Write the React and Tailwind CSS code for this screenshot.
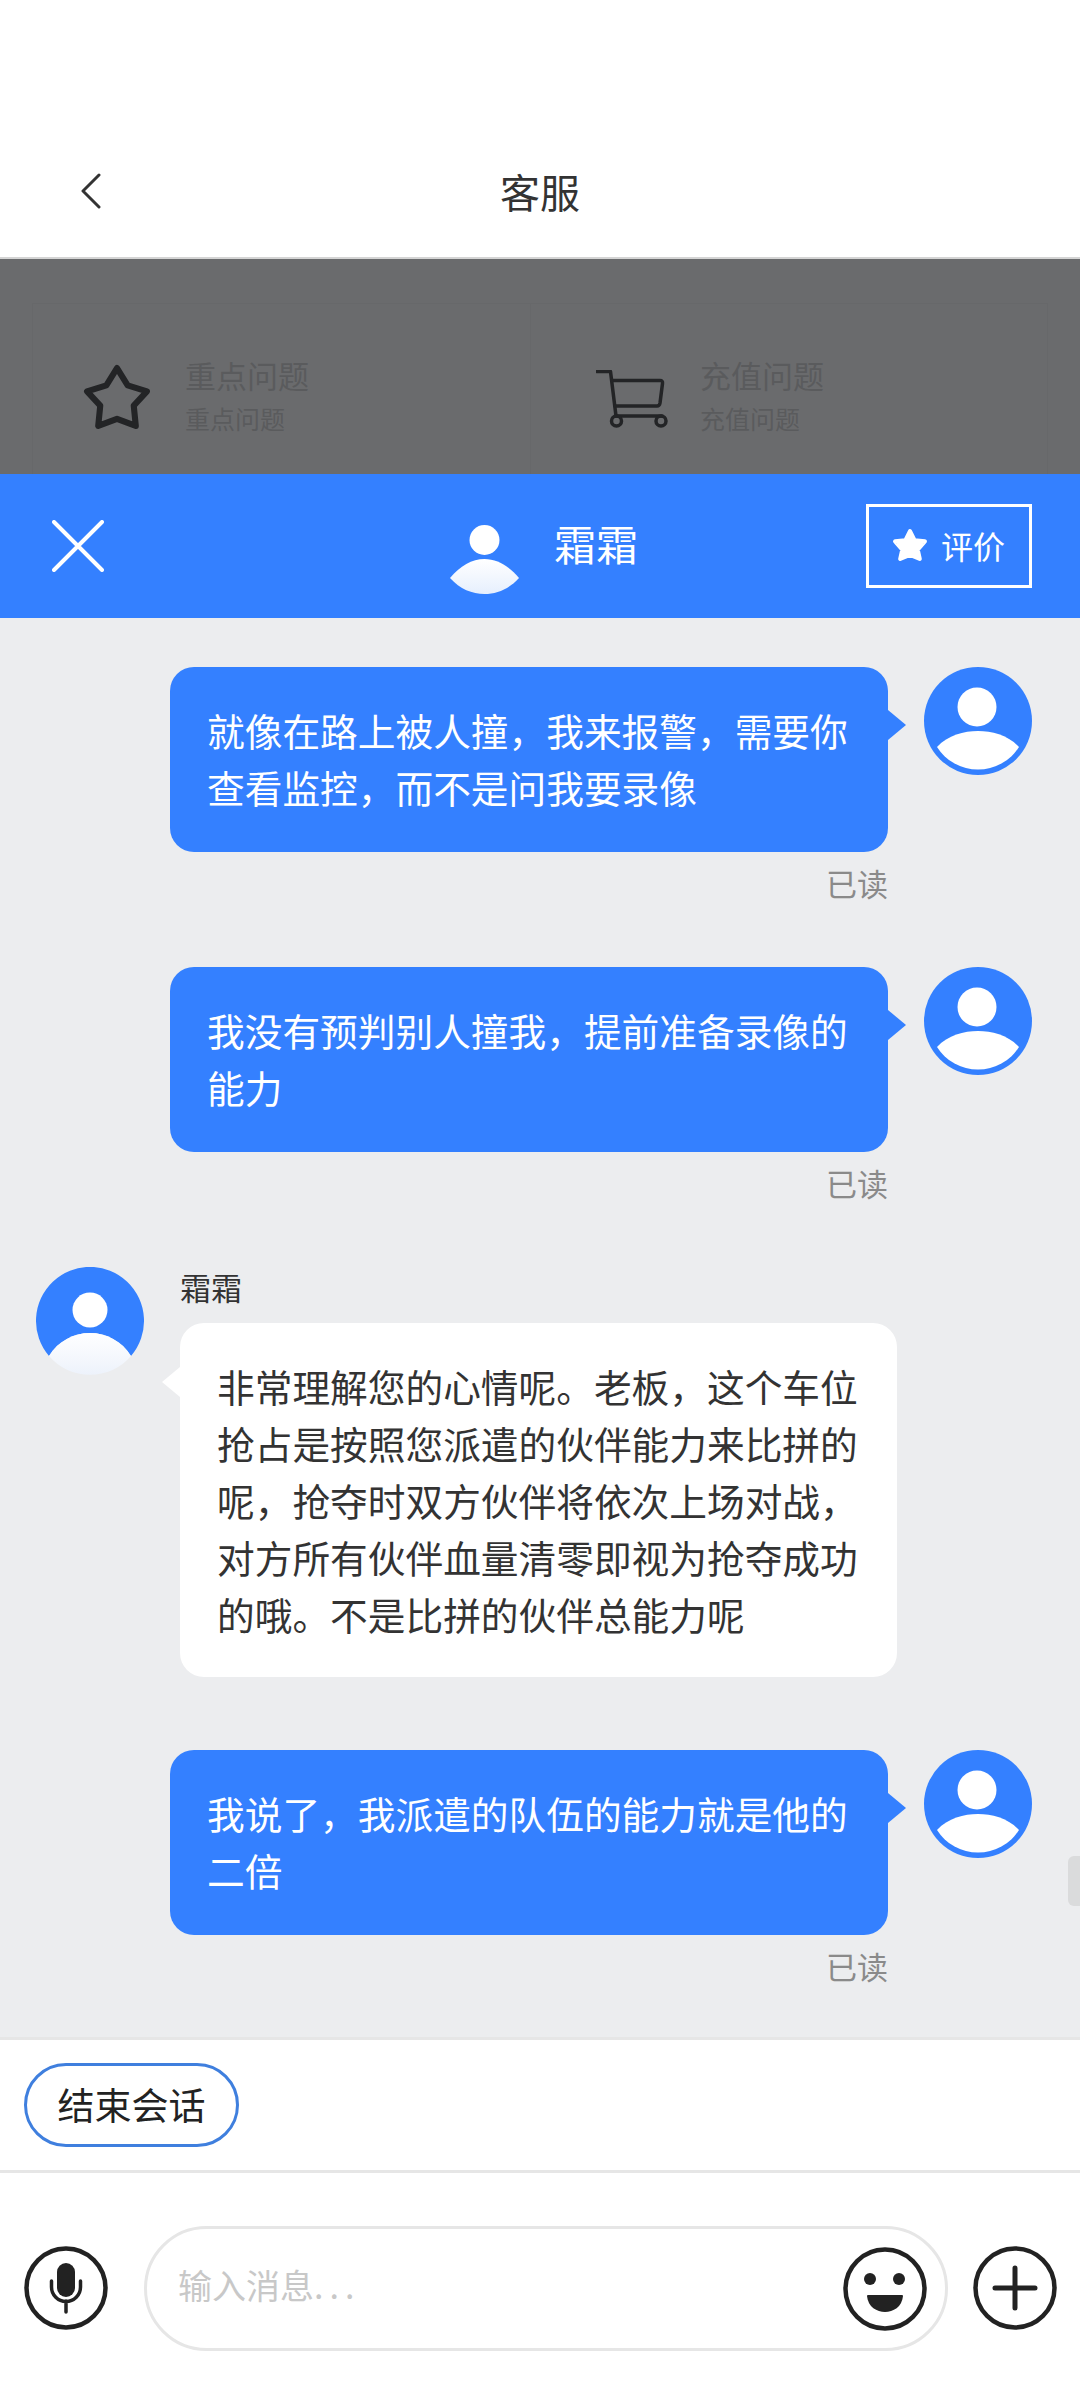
function UserAvatar() {
  return (
    <svg width="108" height="108" viewBox="0 0 108 108" className="shrink-0">
      <circle cx="54" cy="54" r="54" fill="#3480ff" />
      <circle cx="53" cy="40" r="19.5" fill="#fff" />
      <path d="M13 80C24 68 40 64 54 64C68 64 84 68 95 80A48.5 48.5 0 0 1 13 80Z" fill="#fff" />
    </svg>
  );
}

function AgentAvatar() {
  return (
    <svg width="108" height="108" viewBox="0 0 108 108" className="shrink-0">
      <defs>
        <linearGradient id="agentBody" x1="0" y1="0" x2="0" y2="1">
          <stop offset="0" stopColor="#ffffff" />
          <stop offset="1" stopColor="#edf2fb" />
        </linearGradient>
      </defs>
      <path d="M13 89A54 54 0 1 1 95 89C86 74 70 66 54 66C38 66 22 74 13 89Z" fill="#3480ff" />
      <circle cx="54" cy="43" r="17.5" fill="#fff" />
      <path d="M13 89C22 74 38 66 54 66C70 66 86 74 95 89A54 54 0 0 1 13 89Z" fill="url(#agentBody)" />
    </svg>
  );
}

function UserMessage({ children, className = "" }) {
  return (
    <div className={`flex justify-end gap-[36px] pr-[48px] ${className}`}>
      <div className="w-[718px]">
        <div className="relative rounded-[24px] bg-[#3480ff] px-[37px] pb-[37px] pt-[34px] text-[37.7px] leading-[57px] text-white">
          {children}
          <span className="absolute left-full top-[43px] h-0 w-0 border-y-[15px] border-l-[18px] border-y-transparent border-l-[#3480ff]" />
        </div>
        <div className="mt-[13px] text-right text-[31px] leading-[36px] text-[#8a8a8a]">已读</div>
      </div>
      <UserAvatar />
    </div>
  );
}

export default function App() {
  return (
    <div className="relative flex h-[2400px] w-[1080px] flex-col overflow-hidden bg-white font-['Noto_Sans_CJK_SC',sans-serif]">
      {/* Top bar */}
      <header className="relative flex h-[259px] shrink-0 items-end justify-center border-b-[2px] border-[#d4d4d4] pb-[37px]">
        <svg width="24" height="36" viewBox="0 0 24 36" className="absolute bottom-[48px] left-[79px]" fill="none" stroke="#333" strokeWidth="3" strokeLinecap="round" strokeLinejoin="round">
          <path d="M20 2L4 18L20 34" />
        </svg>
        <span className="text-[40px] leading-[58px] text-[#333]">客服</span>
      </header>

      {/* Dimmed page */}
      <section className="h-[215px] shrink-0 overflow-hidden bg-[#6a6b6d] px-[32px] pt-[44px]">
        <div className="flex h-[240px] border border-[#67686a]">
          <div className="flex w-[498px] items-start gap-[34px] border-r border-[#67686a] pl-[50px] pt-[54px]">
            <svg width="68" height="67" viewBox="0 0 67 66" className="mt-[6px] shrink-0" fill="none" stroke="#232426" strokeWidth="6" strokeLinejoin="round">
              <polygon points="33.5,4 44,21 63,27 50,41 52,61 33.5,54 15,61 17,41 4,27 23,21" />
            </svg>
            <div className="text-[#5a5b5d]">
              <div className="text-[31px] leading-[34px]">重点问题</div>
              <div className="mt-[10px] text-[25px] leading-[32px]">重点问题</div>
            </div>
          </div>
          <div className="flex flex-1 items-start gap-[32px] pl-[65px] pt-[54px]">
            <svg width="72" height="58" viewBox="0 0 72 58" className="mt-[12px] shrink-0" fill="none" stroke="#232426" strokeWidth="3.5" strokeLinecap="round" strokeLinejoin="round">
              <path d="M1 1.5H14.5L20 46H66" />
              <path d="M16 10.5H64Q67 10.5 66.5 13.5L64 33Q63.5 36 61 36H19" />
              <circle cx="20.5" cy="51" r="5" />
              <circle cx="65" cy="51" r="5" />
            </svg>
            <div className="text-[#5a5b5d]">
              <div className="text-[31px] leading-[34px]">充值问题</div>
              <div className="mt-[10px] text-[25px] leading-[32px]">充值问题</div>
            </div>
          </div>
        </div>
      </section>

      {/* Blue header */}
      <section className="relative flex h-[144px] shrink-0 items-center justify-between bg-[#3480ff] pl-[52px] pr-[48px]">
        <svg width="52" height="52" viewBox="0 0 52 52" stroke="#fff" strokeWidth="4" strokeLinecap="round">
          <path d="M2 2L50 50M50 2L2 50" />
        </svg>
        <div className="absolute left-[450px] top-[49px] flex items-start gap-[34px]">
          <svg width="70" height="72" viewBox="450 520 70 72">
            <defs>
              <linearGradient id="headBody" x1="0" y1="0" x2="0" y2="1">
                <stop offset="0" stopColor="#ffffff" />
                <stop offset="1" stopColor="#e6effd" />
              </linearGradient>
            </defs>
            <circle cx="484.5" cy="537" r="15" fill="#fff" />
            <path d="M450 575C460 563 472 556 484.5 556C497 556 509 563 519 575C509 586 497 591 484.5 591C472 591 460 586 450 575Z" fill="url(#headBody)" />
          </svg>
          <span className="-mt-[6px] text-[42px] leading-[52px] text-white">霜霜</span>
        </div>
        <div className="flex h-[84px] w-[166px] items-center gap-[13px] border-[3px] border-white pb-[2px] pl-[23px]">
          <svg width="36" height="34" viewBox="0 0 35 33" fill="#fff" stroke="#fff" strokeWidth="4" strokeLinejoin="round">
            <polygon points="17.5,3 22,12 32,13 25,21 27,30 17.5,26 8,30 10,21 3,13 13,12" />
          </svg>
          <span className="text-[32px] leading-[40px] text-white">评价</span>
        </div>
      </section>

      {/* Chat */}
      <main className="relative flex-1 bg-[#ecedef] pt-[49px]">
        <UserMessage>
          就像在路上被人撞，我来报警，需要你
          <br />
          查看监控，而不是问我要录像
        </UserMessage>
        <UserMessage className="mt-[66px]">
          我没有预判别人撞我，提前准备录像的
          <br />
          能力
        </UserMessage>
        <div className="mt-[66px] flex gap-[36px] pl-[36px]">
          <AgentAvatar />
          <div className="w-[717px]">
            <div className="text-[31px] leading-[40px] text-[#333]">霜霜</div>
            <div className="relative mt-[16px] rounded-[24px] bg-white px-[37px] pb-[35px] pt-[34px] text-[37.7px] leading-[57px] text-[#333]">
              非常理解您的心情呢。老板，这个车位
              <br />
              抢占是按照您派遣的伙伴能力来比拼的
              <br />
              呢，抢夺时双方伙伴将依次上场对战，
              <br />
              对方所有伙伴血量清零即视为抢夺成功
              <br />
              的哦。不是比拼的伙伴总能力呢
              <span className="absolute right-full top-[44px] h-0 w-0 border-y-[15px] border-r-[18px] border-y-transparent border-r-white" />
            </div>
          </div>
        </div>
        <UserMessage className="mt-[73px]">
          我说了，我派遣的队伍的能力就是他的
          <br />
          二倍
        </UserMessage>
        <div className="absolute right-0 top-[1238px] h-[50px] w-[12px] rounded-l-[6px] bg-[#dadbdc]" />
      </main>

      {/* Quick action */}
      <div className="flex h-[136px] shrink-0 items-center border-y-[3px] border-[#e6e6e6] bg-white pl-[24px]">
        <div className="flex h-[84px] w-[215px] items-center justify-center rounded-full border-[3px] border-[#3f7fde] text-[37px] text-[#222]">
          结束会话
        </div>
      </div>

      {/* Input */}
      <footer className="flex h-[227px] shrink-0 items-start bg-white pl-[24px] pt-[53px]">
        <svg width="84" height="84" viewBox="0 0 84 84" className="mt-[20px] shrink-0" fill="none" stroke="#222" strokeWidth="4.5">
          <circle cx="42" cy="42" r="39.5" />
          <rect x="33" y="17" width="18" height="34" rx="9" fill="#222" stroke="none" />
          <path d="M27.5 35V41A14.5 14.5 0 0 0 56.5 41V35M42 55V66" strokeWidth="3.5" strokeLinecap="round" />
        </svg>
        <div className="ml-[36px] flex h-[125px] w-[804px] shrink-0 items-center justify-between rounded-full border-[3px] border-[#e6e6e6] pl-[31px] pr-[18px]">
          <span className="mb-[9px] text-[34px] text-[#c8c8c8]">
            输入消息<span className="tracking-[6px]">...</span>
          </span>
          <svg width="84" height="84" viewBox="0 0 84 84" className="shrink-0" fill="none" stroke="#222" strokeWidth="4.5">
            <circle cx="42" cy="42" r="39.5" />
            <circle cx="27" cy="32" r="6" fill="#222" stroke="none" />
            <circle cx="56" cy="32" r="6" fill="#222" stroke="none" />
            <path d="M24 49Q24 48 25 48H59Q60 48 60 49C59 60 50 65 42 65C34 65 25 60 24 49Z" fill="#222" stroke="none" />
          </svg>
        </div>
        <svg width="84" height="84" viewBox="0 0 84 84" className="ml-[25px] mt-[20px] shrink-0" fill="none" stroke="#222" strokeWidth="4.5">
          <circle cx="42" cy="42" r="39.5" />
          <path d="M22 42H62M42 22V62" strokeWidth="5" strokeLinecap="round" />
        </svg>
      </footer>
    </div>
  );
}
